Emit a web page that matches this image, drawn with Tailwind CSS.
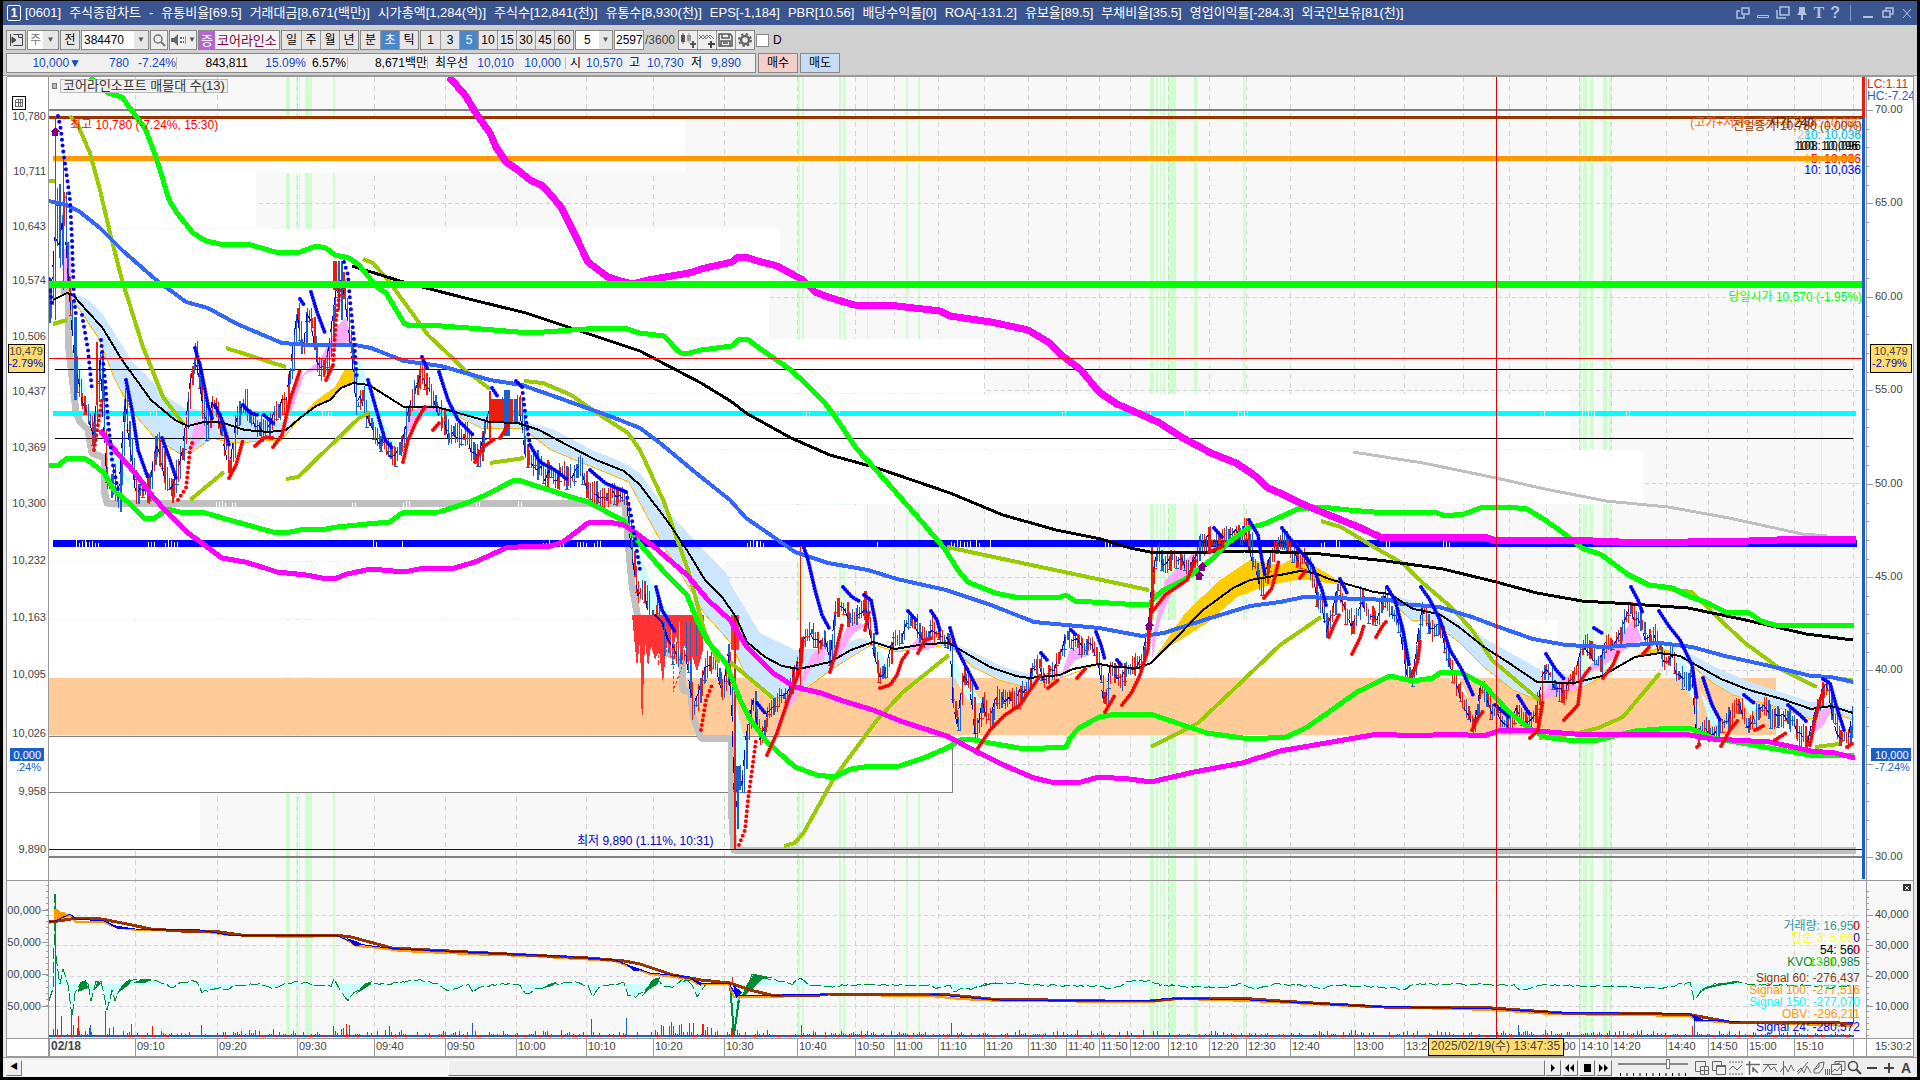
<!DOCTYPE html>
<html lang="ko">

<head>
  <meta charset="UTF-8">
  <meta name="viewport" content="width=device-width, initial-scale=1.0">
  <title>[0601] 주식종합차트</title>
  <script src="https://cdn.jsdelivr.net/npm/@tailwindcss/browser@4"></script>
</head>

<body class="h-screen overflow-hidden bg-black pt-px pb-[3px] px-[3px] font-['Liberation_Sans','Noto_Sans_CJK_KR',sans-serif] text-xs text-black">
  <div class="flex h-full flex-col bg-[#e8e8e8]">

    <!-- Title bar -->
    <header class="flex h-6 shrink-0 items-center bg-[#3a5590] px-1 text-white">
      <span class="mr-1 flex h-4 w-3.5 items-center justify-center rounded-xs border border-white font-bold">1</span>
      <h1 class="flex gap-2 whitespace-nowrap text-[13px]">
        <span>[0601]</span><span>주식종합차트</span><span>-</span><span>유통비율[69.5]</span>
        <span>거래대금[8,671(백만)]</span><span>시가총액[1,284(억)]</span><span>주식수[12,841(천)]</span>
        <span>유통수[8,930(천)]</span><span>EPS[-1,184]</span><span>PBR[10.56]</span><span>배당수익률[0]</span>
        <span>ROA[-131.2]</span><span>유보율[89.5]</span><span>부채비율[35.5]</span><span>영업이익률[-284.3]</span>
        <span>외국인보유[81(천)]</span>
      </h1>
      <div class="ml-auto flex items-center gap-1.5 text-[#b4c1de]">
        <button aria-label="분리"><svg width="14" height="14" fill="none" stroke="currentColor" stroke-width="1.5"><path d="M4 5H1v7h7V9M6 2h7v6H6z" /></svg></button>
        <button aria-label="접기"><svg width="14" height="14" fill="none" stroke="currentColor"><path d="M1.500 9.500h11v2h-11z" /></svg></button>
        <button aria-label="복사"><svg width="14" height="14" fill="none" stroke="currentColor" stroke-width="1.500"><path d="M4 1h9v8H4zM1 4v8h9" /></svg></button>
        <button aria-label="고정"><svg width="12" height="14" fill="currentColor"><path d="M3 1h6v5l2 3H7v5H5V9H1l2-3z" /></svg></button>
        <button class="font-['Liberation_Serif',serif] text-base leading-4 font-bold">T</button>
        <button class="text-base leading-4 font-bold">?</button>
        <span class="mx-1 h-4 w-px bg-[#8a9bc4]"></span>
        <button aria-label="최소화"><svg width="14" height="14" fill="currentColor"><path d="M2 10h10v2H2z" /></svg></button>
        <button aria-label="이전 크기"><svg width="14" height="14" fill="none" stroke="currentColor" stroke-width="1.500"><path d="M5 5V2h7v6H9M2 5h7v6H2z" /></svg></button>
        <button aria-label="닫기"><svg width="12" height="14" fill="none" stroke="currentColor"><path d="M2 3l8 9M10 3l-8 9" /></svg></button>
      </div>
    </header>

    <!-- Toolbars -->
    <section class="flex h-[51px] shrink-0 flex-col gap-[3px] border-b border-[#999] bg-[#d0d0d0] pt-[5px] pl-[3px]">
      <div class="flex h-5 items-stretch gap-px leading-none">
        <button aria-label="메뉴" class="w-5 border border-[#888] bg-[#e6e6e6] px-0.5"><svg width="14" height="14" fill="none" stroke="#444"><path d="M4.500 1.500h9v11h-9M9.500 1.500v3h4M1.500 1v12" /><path d="M3 4l4 3-4 3z" fill="#444" /></svg></button>
        <div class="flex w-8 border border-[#888] bg-white">
          <select aria-label="구분" class="w-4 appearance-none pl-0.5 text-[#777]"><option>주</option></select>
          <span class="flex w-4 items-center justify-center bg-[#e6e6e6] text-[8px] text-[#555]">▼</span>
        </div>
        <button class="w-5 border border-[#888] bg-[#e6e6e6]">전</button>
        <div class="flex w-[68px] border border-[#888] bg-white">
          <input aria-label="종목코드" value="384470" class="w-13 pl-0.5">
          <span class="flex w-4 items-center justify-center bg-[#e6e6e6] text-[8px] text-[#555]">▼</span>
        </div>
        <button aria-label="검색" class="w-[18px] border border-[#888] bg-[#eee] pl-px"><svg width="14" height="14" fill="none" stroke="#777" stroke-width="1.500"><circle cx="6" cy="6" r="4" /><path d="M9 9l4 4" stroke-width="2" /></svg></button>
        <button aria-label="소리" class="flex w-7 items-center border border-[#888] bg-[#eee] text-[8px] text-[#555]"><svg width="15" height="14" fill="#666"><path d="M1 5h3l4-4v12L4 9H1z" /><path d="M10 4h2v2h-2zM10 8h2v2h-2zM13 4h1v2h-1zM13 8h1v2h-1z" /></svg><span class="border-l border-[#999] pl-0.5">▼</span></button>
        <div class="flex w-[82px] items-center overflow-hidden border border-[#888] bg-[#f4f4f4] text-[13px] whitespace-nowrap text-[#800040]">
          <span class="mr-0.5 bg-[#b565cf] px-0.5 py-[3px] text-white">증</span>코어라인소
        </div>
        <div id="period" class="flex border border-[#888] bg-[#e6e6e6]"></div>
        <div id="unit" class="flex border border-[#888] bg-[#e6e6e6]"></div>
        <div id="minutes" class="flex border border-[#888] bg-[#e6e6e6]"></div>
        <div class="flex w-[38px] border border-[#888] bg-white">
          <select aria-label="간격" class="w-6 appearance-none pl-2"><option>5</option></select>
          <span class="flex w-3.5 items-center justify-center bg-[#e6e6e6] text-[8px] text-[#555]">▼</span>
        </div>
        <input aria-label="봉 개수" value="2597" class="w-[30px] border border-[#888] bg-white pl-px">
        <span class="flex w-8 items-center text-[#444]">/3600</span>
        <div class="flex border border-[#888] bg-[#eee]">
          <button aria-label="지표 추가" class="w-[19px] border-r border-[#999]"><svg width="18" height="18" fill="#555"><path d="M2 4h4v7H2zM3.500 2h1v11h-1z" /><path fill="#999" d="M8 4h4v6H8zM9.500 2h1v10h-1z" /><path d="M11 12h2v-2h2v2h2v2h-2v3h-2v-3h-2z" /></svg></button>
          <button aria-label="선 추가" class="w-[19px] border-r border-[#999]"><svg width="18" height="18" fill="none" stroke="#777"><path d="M1 8l4-4 3 4 4-4 4 4M1 4l4 4 4-4 4 4" /><path d="M13 10v7M10 13h7" stroke="#444" stroke-width="2" /></svg></button>
          <button aria-label="저장" class="w-[19px] border-r border-[#999]"><svg width="18" height="18" fill="none" stroke="#555" stroke-width="1.500"><path d="M2 3h11l2 2v10H2zM5 3v4h7V3M4 15v-5h9v5M6 12h5" /></svg></button>
          <button aria-label="설정" class="w-[18px]"><svg width="18" height="18" fill="none" stroke="#666"><circle cx="9" cy="9" r="4" stroke-width="2.500" /><circle cx="9" cy="9" r="6" stroke-width="2" stroke-dasharray="2.400 2.312" /></svg></button>
        </div>
        <label class="flex items-center gap-1"><input type="checkbox" class="h-[13px] w-[13px] appearance-none border border-[#888] bg-white">D</label>
      </div>

      <div class="flex h-5 items-stretch gap-0.5 leading-none">
        <div class="flex w-[750px] items-center border border-[#888] bg-[#f0f0f0] whitespace-nowrap text-[#1448c0]">
          <span class="w-[74px] text-right">10,000▼</span>
          <span class="w-12 text-right">780</span>
          <span class="mr-px w-12 border-r border-[#bbb] text-right">-7.24%</span>
          <span class="w-[70px] text-right text-black">843,811</span>
          <span class="w-[58px] text-right">15.09%</span>
          <span class="w-[42px] border-r border-[#bbb] pr-px text-right text-black">6.57%</span>
          <span class="w-[80px] border-r border-[#bbb] text-right text-black">8,671백만</span>
          <span class="w-10 text-right text-black">최우선</span>
          <span class="w-[46px] text-right">10,010</span>
          <span class="w-[52px] border-r border-[#bbb] pr-1 text-right">10,000</span>
          <span class="ml-1 w-4 text-black">시</span><span class="w-[43px]">10,570</span>
          <span class="w-[18px] text-black">고</span><span class="w-[44px]">10,730</span>
          <span class="w-5 text-black">저</span><span>9,890</span>
        </div>
        <button class="w-10 border border-[#888] bg-[#f5cfc9]">매수</button>
        <button class="w-10 border border-[#888] bg-[#c6dcf2]">매도</button>
      </div>
    </section>

    <!-- Chart -->
    <main class="min-h-0 flex-1 px-[3px]">
      <svg id="chart" viewBox="6 76 1908 981" class="block h-full w-full bg-white text-[11px]" shape-rendering="crispEdges" fill="none"></svg>
    </main>

    <!-- Scroll bar and chart tools -->
    <footer class="flex h-5 shrink-0 items-center border-t border-[#999] bg-[#eee] px-[3px]">
      <button aria-label="왼쪽" class="h-4 w-4 border border-white border-r-[#777] border-b-[#777] text-[8px]">◀</button>
      <div class="flex h-4 flex-1 bg-[#f7f7f7]">
        <div class="w-[28%]"></div>
        <div class="flex-1 border border-white border-r-[#777] border-b-[#777] bg-[#eee]"></div>
      </div>
      <div class="flex h-4 gap-px">
        <button aria-label="재생" class="w-4 border border-white border-r-[#777] border-b-[#777]"><svg width="14" height="14"><path d="M5 3v8l4-4z" /></svg></button>
        <button aria-label="뒤로" class="w-4 border border-white border-r-[#777] border-b-[#777]"><svg width="14" height="14"><path d="M6 3v8L2 7zM11 3v8L7 7z" /></svg></button>
        <button aria-label="정지" class="w-4 border border-white border-r-[#777] border-b-[#777]"><svg width="14" height="14"><path d="M4 3h7v8H4z" /></svg></button>
        <button aria-label="앞으로" class="w-4 border border-white border-r-[#777] border-b-[#777]"><svg width="14" height="14"><path d="M2 3v8l4-4zM7 3v8l4-4z" /></svg></button>
      </div>
      <div class="mx-1.5 flex w-[70px] flex-col gap-1">
        <input type="range" aria-label="속도" value="73" class="h-2.5 w-full appearance-none bg-[linear-gradient(#888,#888)] bg-[length:100%_2px] bg-center bg-no-repeat [&::-webkit-slider-thumb]:h-2.5 [&::-webkit-slider-thumb]:w-1 [&::-webkit-slider-thumb]:appearance-none [&::-webkit-slider-thumb]:border [&::-webkit-slider-thumb]:border-[#777] [&::-webkit-slider-thumb]:bg-white">
        <svg width="70" height="3" class="block"><path d="M2 1.500h68" stroke="#000" stroke-width="3" stroke-dasharray="1 5.500" /></svg>
      </div>
      <div class="flex items-center gap-px text-[#666]">
        <button aria-label="새 창" class="w-4"><svg width="16" height="16" fill="none" stroke="currentColor"><path d="M6 11.500H1.500v-10h10V6M6.500 6.500h8v8h-8zM10.500 6.500v8M6.500 10.500h8" /></svg></button>
        <button aria-label="겹치기" class="w-4"><svg width="16" height="16" fill="none" stroke="currentColor"><path d="M5 10.500H1.500v-9h9V5M5.500 5.500h9v9h-9z" /><path d="M5 6h10" stroke-width="2" /></svg></button>
        <button aria-label="지표" class="w-4"><svg width="16" height="16" fill="none" stroke="currentColor"><path d="M1 2h14M1 14h14" stroke-dasharray="2 1" /><path d="M1 10l4-4 4 4 5-5" /></svg></button>
        <button aria-label="십자선" class="w-4 bg-white"><svg width="16" height="16" fill="none" stroke="currentColor"><path d="M4.500 1v14M1 4.500h14M8 12V7M8 8l5 5" stroke-width="1.500" /></svg></button>
        <button aria-label="수평선" class="w-4"><svg width="16" height="16" fill="none" stroke="currentColor"><path d="M1 4.500h14M1 12l5-7 3 5 3-3 3 5" /></svg></button>
        <button aria-label="수직선" class="w-4"><svg width="16" height="16" fill="none" stroke="currentColor"><path d="M4.500 1v14M1 12l5-6 3 6 3-7 3 6" /></svg></button>
        <button aria-label="추세선" class="w-4"><svg width="16" height="16" fill="none" stroke="currentColor"><path d="M2 14L12 2M1 12l4-4 3 5 3-7 4 7" /></svg></button>
        <button aria-label="전체 삭제" class="w-4"><svg width="18" height="16" fill="none" stroke="currentColor"><path d="M1 10l5-7 5-1-1 6-4 5H1zM6 3v4l-5 3" /><path d="M12.500 9v6M14.500 9v6M16.500 9v6" /></svg></button>
        <button aria-label="차트 묶음" class="w-4"><svg width="16" height="16" fill="none" stroke="currentColor"><path d="M5 4V1.500h10v9h-3M1.500 4.500h10v10h-10zM2 12l3-3 2 2 4-5M6 4l4-1" /></svg></button>
        <button aria-label="돋보기" class="w-4"><svg width="16" height="16" fill="none" stroke="#444" stroke-width="1.500"><circle cx="6" cy="6" r="4.500" /><path d="M9 9l5 5" stroke-width="2" /></svg></button>
        <button aria-label="축소" class="w-4"><svg width="16" height="16"><path d="M3 7h10v2H3z" fill="#444" /></svg></button>
        <button aria-label="확대" class="w-4"><svg width="16" height="16"><path d="M3 7h4V3h2v4h4v2H9v4H7V9H3z" fill="#444" /></svg></button>
        <button class="w-4 text-sm leading-4 font-bold text-[#444]">A</button>
      </div>
    </footer>
  </div>

  <script>
    // Toolbar toggles
    const addToggles = (id, labels, active) => {
      document.getElementById(id).innerHTML = labels.map((label, i) =>
        `<button class="w-[19px] ${i ? 'border-l border-[#999]' : ''} ${label === active ? 'bg-[#4a86c8] text-white' : ''}">${label}</button>`
      ).join('');
    };
    addToggles('period', ['일', '주', '월', '년']);
    addToggles('unit', ['분', '초', '틱'], '초');
    addToggles('minutes', ['1', '3', '5', '10', '15', '30', '45', '60'], '5');

    const out = [];
    const add = (s) => out.push(s);
    const rect = (x, y, x2, y2, color, extra = '') => add(`<rect x="${x}" y="${y}" width="${x2 - x}" height="${y2 - y}" fill="${color}" ${extra}/>`);
    const line = (points, color, width = 1, extra = '') => add(`<polyline points="${points}" stroke="${color}" stroke-width="${width}" stroke-linejoin="round" ${extra}/>`);
    const area = (points, color) => add(`<polygon points="${points}" fill="${color}"/>`);
    const text = (x, y, value, color = '#444', anchor = 'start', extra = '') => add(`<text x="${x}" y="${y}" fill="${color}" text-anchor="${anchor}" ${extra}>${value}</text>`);
    // Labels drawn over the plot are one size larger than the axis
    const note = (x, y, value, color, anchor = 'end') => text(x, y, value, color, anchor, 'class="text-xs"');

    // Fixed seed keeps the bars the same on each load
    let seed = 7;
    const random = () => (seed = (seed * 16807) % 2147483647) / 2147483647;

    const times = [['02/18', 49], ['09:10', 135], ['09:20', 217], ['09:30', 297], ['09:40', 374], ['09:50', 445], ['10:00', 516], ['10:10', 586], ['10:20', 653], ['10:30', 724], ['10:40', 797], ['10:50', 855], ['11:00', 894], ['11:10', 938], ['11:20', 984], ['11:30', 1028], ['11:40', 1066], ['11:50', 1099], ['12:00', 1130], ['12:10', 1168], ['12:20', 1209], ['12:30', 1246], ['12:40', 1290], ['13:00', 1354], ['13:20', 1404], ['', 1463], ['', 1509], ['14:00', 1546], ['14:10', 1579], ['14:20', 1611], ['14:40', 1666], ['14:50', 1708], ['15:00', 1747], ['15:10', 1794], ['', 1853]];

    // Pane background, signal stripes, grid
    rect(49, 77, 1866, 1038, '#f8f8f8');
    const stripes = [[286, 4], [296, 1], [299, 1], [305, 4], [310, 2], [333, 2], [798, 2], [802, 2], [839, 2], [843, 2], [867, 1], [906, 2], [918, 2], [1150, 4], [1156, 2], [1160, 1], [1163, 2], [1168, 8], [1194, 3], [1243, 2], [1579, 3], [1583, 2], [1586, 1], [1590, 1], [1592, 1], [1603, 4], [1609, 2], [1821, 1]];
    stripes.forEach(([x, w]) => rect(x, 77, x + w, 1038, '#ccffcc'));
    times.slice(1).forEach(([, x]) => line(`${x + .5},77 ${x + .5},1038`, '#d4d4d4', 1, 'stroke-dasharray="5 4"'));
    [203, 297, 390, 483, 577, 670, 764, 915, 945, 976, 1006].forEach((y) => line(`49,${y + .5} 1862,${y + .5}`, '#d4d4d4', 1, 'stroke-dasharray="4 3"'));

    // Volume by price
    [[119, 173, 685], [173, 228, 256], [229, 283, 780], [284, 338, 769], [339, 393, 984], [394, 449, 1571], [450, 504, 1643], [505, 561, 864], [562, 619, 725], [620, 677, 1557], [737, 792, 953], [793, 849, 200]].forEach(([y, y2, x]) => rect(49, y, x, y2, '#fff'));
    rect(49, 678, 1776, 735, '#ffcc99');
    line('49,736.5 952.500,736.500 952.500,792.500 49,792.500', '#808080');

    // Clouds round the moving averages
    area('67,290 88,300 102,313 131,360 167,397 184,408 220,412 286,423 300,418 298,420 282,440 233,443 212,438 192,452 180,454 155,438 131,410 114,377 98,337 78,307', '#cce6ff');
    area('437,405 518,420 555,430 592,450 624,463 640,473 664,507 697,543 726,573 734,590 760,633 795,650 830,648 860,638 873,642 873,644 843,662 817,680 795,697 773,698 747,677 730,642 704,613 689,587 660,540 640,503 629,482 551,450 522,428 481,428', '#cce6ff');
    area('873,640 895,647 949,641 969,650 1003,667 1034,675 1073,669 1055,680 1025,687 999,680 973,667 949,645 895,652', '#cce6ff');
    area('1390,594 1413,601 1443,612 1484,638 1509,652 1545,672 1578,676 1602,676 1574,692 1537,700 1513,690 1484,667 1460,643 1431,621 1411,620 1390,600', '#cce6ff');
    area('1680,656 1692,655 1721,670 1753,683 1811,702 1827,702 1853,710 1853,720 1831,712 1811,719 1770,705 1733,695 1713,683', '#cce6ff');
    area('300,418 314,402 335,387 345,369 357,371 375,387 404,407 388,397 369,385 353,383 341,388 330,400 316,406', '#ffcc00');
    area('1151,663 1185,613 1220,580 1250,560 1280,565 1292,559 1313,565 1341,582 1341,585 1300,579 1280,583 1263,587 1237,597 1207,623 1172,645', '#ffcc00');
    area('1602,676 1640,653 1660,647 1680,655 1660,653 1635,657', '#ffcc00');
    line('67,297 78,307 98,337 114,377 131,410 155,438 180,454 192,452 212,438 233,443 282,440 298,420', '#ffbb00');
    line('441,408 481,428 522,428 551,450 629,482 640,503 660,540 689,587 704,613 730,642 747,677 773,698 795,697 817,680 843,662 873,644 895,652 949,645 973,667 999,680 1025,687 1055,680 1099,664', '#ffbb00');
    line('1390,600 1411,620 1431,621 1460,643 1484,667 1513,690 1537,700 1574,692 1602,677', '#ffbb00');
    line('1680,656 1713,683 1733,695 1770,705 1811,719 1831,712 1853,720', '#ffbb00');
    ['357,350 370,390 385,425 400,448 402,455 390,450 372,425 358,400', '76,340 88,400 92,420 86,420 78,380', '100,400 112,440 124,470 136,490 125,480 108,460', '524,430 545,462 570,475 550,478 530,455', '590,480 624,492 590,492', '634,540 655,590 690,650 676,640 655,620 640,590', '733,690 744,740 748,760 738,765', '873,640 882,672 890,670 880,650', '950,650 965,680 985,705 968,700 956,680', '1313,570 1330,600 1324,612', '1395,605 1412,650 1410,668 1400,640', '1435,615 1460,680 1470,700 1450,680', '1665,635 1690,670 1700,715 1688,690', '1700,690 1722,725 1710,725', '1740,695 1760,705 1750,715', '1790,715 1808,740 1798,730']
      .forEach((points) => area(points, '#ccffff'));
    ['288,420 296,380 320,360 338,325 346,318 352,340 338,345 325,366 304,375 292,410', '64,250 70,240 72,300 62,290', '188,450 196,420 215,425 205,435 192,450', '403,440 412,410 430,405 445,410 425,415 410,430', '770,735 795,690 812,655 826,640 824,660 810,670 795,700', '832,660 850,620 866,625 852,635 838,660', '908,650 920,635 940,645 925,650', '1060,680 1070,650 1085,645 1090,655 1075,660', '1152,640 1165,580 1186,560 1200,545 1194,570 1175,585 1160,620 1152,660', '1210,550 1246,532 1240,545', '1540,700 1548,685 1572,675 1578,690 1560,695', '1580,675 1600,655 1625,630 1634,618 1642,640 1625,650 1600,668', '1812,735 1822,710 1834,705 1824,725']
      .forEach((points) => area(points, '#ffaaff'));

    // Lowest price trail
    line('61,290 68,292 69,350 73,385 76,412 80,422 88,430 92,453 104,458 104,490 107,503 625,503 628,540 632,585 640,630 665,652 682,660 683,690 691,692 693,717 701,738 731,739 731,803 734,850 1856,850', '#c0c0c0', 7);

    // Horizontal levels
    line('49,110 1862,110', '#808080', 2);
    line('49,117.500 1862,117.500', '#993300', 3);
    line('53,158.500 1856,158.500', '#ff9900', 5);
    line('53,413.500 1856,413.500', '#00ffff', 5);
    line('53,543.500 1857,543.500', '#0000ff', 7);
    // Short breaks where hidden bars cross the levels
    [[76, 4], [86, 3], [95, 2], [148, 3], [165, 5], [373, 2], [402, 1], [543, 3], [560, 2], [577, 4], [594, 3], [747, 4], [757, 3], [877, 1], [951, 4], [964, 3], [976, 2], [990, 1], [1105, 3], [1321, 2], [1336, 2], [1386, 2], [1443, 3]].forEach(([x, count]) => {
      for (let k = 0; k < count; k++) rect(x + k * 3, 540 + Math.floor(random() * 4), x + k * 3 + 1, 547, '#fff');
    });
    [[150, 3], [322, 4], [803, 3], [836, 2], [1062, 2], [1150, 1], [1184, 2], [1238, 4], [1541, 2], [1582, 5], [1626, 2]].forEach(([x, count]) => {
      for (let k = 0; k < count; k++) rect(x + k * 3, 411 + Math.floor(random() * 2), x + k * 3 + 1, 416, '#fff');
    });
    [[216, 4], [232, 2], [352, 2], [403, 3], [476, 2], [518, 2]].forEach(([x, count]) => {
      for (let k = 0; k < count; k++) rect(x + k * 3, 501 + Math.floor(random() * 3), x + k * 3 + 1, 507, '#fff');
    });
    line('55,369.500 1853,369.500', '#000');
    line('55,438.500 1853,438.500', '#000');
    line('49,849.500 1863,849.500', '#0000c0');
    line('49,857 1863,857', '#808080', 2);

    // Candles follow these closing points
    const closes = [49, 310, 53, 270, 57, 200, 60, 260, 64, 190, 67, 280, 70, 300, 75, 370, 82, 400, 88, 420, 93, 440, 97, 390, 100, 360, 104, 440, 107, 485, 113, 480, 118, 495, 122, 440, 125, 400, 130, 450, 136, 492, 143, 488, 150, 488, 155, 440, 160, 450, 165, 480, 172, 487, 178, 470, 184, 440, 190, 380, 195, 355, 200, 390, 206, 430, 214, 400, 222, 430, 229, 466, 237, 420, 245, 405, 255, 430, 270, 425, 280, 405, 286, 400, 292, 360, 297, 315, 302, 350, 307, 315, 312, 330, 317, 365, 325, 365, 331, 330, 335, 290, 341, 280, 345, 300, 352, 355, 356, 400, 362, 395, 369, 425, 380, 440, 388, 450, 395, 455, 402, 440, 408, 410, 415, 390, 420, 370, 427, 385, 435, 410, 442, 420, 449, 435, 465, 435, 473, 450, 478, 455, 485, 430, 490, 410, 500, 407, 515, 405, 520, 405, 525, 450, 535, 465, 545, 475, 560, 475, 570, 480, 580, 470, 588, 490, 600, 495, 622, 495, 627, 510, 632, 560, 638, 600, 645, 590, 650, 625, 657, 610, 662, 640, 670, 650, 680, 655, 688, 660, 692, 710, 698, 690, 705, 665, 715, 660, 722, 690, 728, 660, 732, 720, 735, 825, 738, 770, 742, 780, 747, 730, 753, 700, 760, 740, 767, 715, 775, 700, 790, 690, 797, 660, 803, 640, 809, 635, 818, 645, 825, 640, 830, 665, 835, 610, 841, 603, 850, 620, 857, 610, 864, 605, 871, 635, 878, 675, 885, 670, 893, 640, 902, 635, 908, 615, 915, 625, 922, 640, 930, 625, 938, 635, 945, 645, 950, 640, 953, 710, 958, 725, 962, 680, 970, 685, 975, 735, 982, 700, 990, 720, 997, 700, 1010, 700, 1020, 695, 1028, 680, 1037, 662, 1044, 678, 1052, 672, 1058, 660, 1065, 636, 1075, 640, 1082, 650, 1090, 640, 1097, 660, 1104, 700, 1110, 670, 1120, 680, 1128, 670, 1135, 665, 1143, 650, 1149, 620, 1152, 580, 1157, 555, 1163, 570, 1170, 560, 1180, 558, 1186, 570, 1193, 560, 1200, 542, 1210, 537, 1220, 542, 1230, 530, 1238, 537, 1246, 530, 1253, 560, 1261, 585, 1270, 560, 1280, 542, 1288, 547, 1296, 560, 1304, 560, 1312, 580, 1322, 610, 1326, 630, 1333, 610, 1338, 590, 1345, 615, 1352, 625, 1360, 600, 1368, 620, 1375, 620, 1383, 598, 1392, 610, 1400, 630, 1405, 670, 1412, 675, 1418, 640, 1422, 603, 1430, 630, 1440, 630, 1450, 670, 1460, 700, 1468, 710, 1473, 725, 1480, 690, 1488, 708, 1496, 715, 1510, 722, 1517, 712, 1525, 723, 1533, 715, 1540, 700, 1542, 670, 1550, 680, 1557, 690, 1562, 695, 1570, 680, 1578, 670, 1583, 640, 1590, 652, 1600, 666, 1606, 640, 1618, 640, 1624, 620, 1630, 608, 1636, 620, 1645, 635, 1655, 635, 1662, 660, 1670, 655, 1680, 680, 1692, 680, 1696, 735, 1704, 720, 1710, 735, 1720, 725, 1730, 715, 1738, 705, 1748, 725, 1760, 710, 1768, 712, 1775, 720, 1790, 718, 1797, 733, 1808, 742, 1813, 715, 1820, 698, 1827, 688, 1833, 720, 1840, 735, 1848, 738, 1853, 710];
    const candles = [];
    for (let i = 0; i < closes.length - 2; i += 2) {
      const [x, y, x2, y2] = closes.slice(i, i + 4);
      for (let px = x; px < x2; px += 2) {
        candles.push([px, y + (y2 - y) * (px - x) / (x2 - x) + (random() - .5) * 12]);
      }
    }
    let trend = '';
    candles.forEach(([x, y], i) => {
      const previous = i ? candles[i - 1][1] : y;
      const size = 4 + random() * (x < 210 ? 24 : x < 760 ? 18 : 14);
      const color = random() > .5 ? '#e81d0c' : '#1a5fcc';
      line(`${x + .5},${Math.round(Math.min(y, previous) - size / 2)} ${x + .5},${Math.round(Math.max(y, previous) + size / 2)}`, color, i % 5 ? 1 : 2);
      if (i % 4 === 0) line(`${x - 1},${Math.round(y + size / 2) + .5} ${x + 3},${Math.round(y + size / 2) + .5}`, color);
      if (i % 2) trend += `${x},${y.toFixed(1)} `;
    });
    line(trend, '#0000cc', 1, 'stroke-dasharray="16 10"');
    rect(49, 280, 51, 323, '#1a5fcc');
    rect(55, 117, 56, 320, '#e81d0c');
    rect(63, 158, 64, 290, '#e81d0c');
    rect(74, 317, 77, 400, '#1a5fcc');
    rect(96, 342, 98, 405, '#e81d0c');
    rect(333, 261, 337, 290, '#e81d0c');
    rect(338, 261, 340, 310, '#1a5fcc');
    rect(341, 261, 343, 320, '#1a5fcc');
    rect(489, 391, 491, 440, '#e81d0c');
    rect(491, 399, 504, 423, '#e81d0c');
    rect(504, 390, 510, 436, '#1a5fcc');
    rect(510, 399, 513, 423, '#e81d0c');
    rect(514, 399, 518, 423, '#1a5fcc');
    rect(800, 546, 801, 690, '#e81d0c');
    rect(1151, 547, 1153, 612, '#e81d0c');
    rect(731, 615, 739, 650, '#ff3333');
    rect(734, 615, 736, 849, '#e81d0c');
    rect(736, 766, 741, 790, '#1a5fcc');

    // Selling volume block
    area('632,615 704,615 703,650 697,672 692,655 688,665 685,645 680,655 676,635 671,660 667,640 663,684 659,650 655,660 651,645 648,668 645,640 642,731 640,640 637,668', '#ff3333');
    line('658,640 658,665 673,640 673,692 691,640 691,670', '#ff3333', 1, 'stroke-dasharray="3 2"');
    line('655,615 662,622 668,640 674,648', '#0000ff', 2);
    [664, 671, 679, 686, 690, 696].forEach((x) => rect(x, 622, x + 1, 656, x % 2 ? '#fff' : '#1a5fcc'));

    // Moving averages
    ['49,181 55,181', '70,116 77,123 90,153 100,190 110,233 122,280 143,347 163,397 184,425', '53,324 67,320', '226,348 286,367', '190,500 224,472', '286,479 298,477 326,450 359,418 369,413', '363,259 373,263 388,280 428,335 465,370 490,389', '524,381 543,383 571,395 600,415 628,433 640,450 664,502 689,573 704,630 719,663', '730,662 773,698', '784,846 795,843 804,832 834,778 877,720 903,692 949,655', '947,547 1003,559 1149,590', '1151,747 1198,723 1233,690 1280,645 1321,617', '1321,521 1341,527 1374,547 1402,563 1423,583 1451,607 1472,630 1492,660 1525,688 1539,700', '1539,738 1578,733 1598,728 1623,717 1660,673', '1668,589 1692,592 1717,617 1745,643 1782,670 1817,687', '1815,747 1839,744', '1839,679 1853,680', '490,463 524,458']
      .forEach((points) => line(points, '#99cc00', 4));
    line('1353,452 1423,463 1496,478 1545,489 1606,501 1668,507 1729,518 1802,534 1827,536', '#c0c0c0', 3);
    line('49,201 67,205 80,212 100,228 122,250 155,279 186,302 208,308 237,324 282,343 310,345 355,345 371,348 404,361 441,366 490,380 522,385 559,398 612,417 640,428 660,443 701,477 730,500 746,518 775,538 795,552 828,563 868,570 897,579 946,590 991,605 1034,622 1099,628 1142,636 1164,633 1207,619 1250,606 1280,602 1304,597 1390,600 1402,604 1439,607 1472,617 1496,626 1533,639 1566,645 1606,647 1660,643 1692,647 1725,656 1770,666 1811,676 1831,677 1853,682', '#3366ff', 4);
    line('352,266 400,281 422,287 473,300 526,313 571,328 628,347 640,351 701,383 732,402 746,413 791,438 830,455 877,468 950,493 1003,515 1056,530 1101,539 1130,548 1150,552 1211,552 1244,551 1280,552 1321,554 1386,561 1443,569 1496,582 1537,593 1582,601 1631,604 1688,608 1741,619 1806,634 1853,640', '#000', 3);
    line('53,300 67,293 73,295 88,312 102,327 122,360 151,400 175,420 188,426 204,422 220,422 245,430 269,432 286,430 300,418 316,406 330,400 341,388 353,383 369,385 388,397 404,407 437,407 469,416 490,422 518,423 539,430 567,445 596,460 624,471 640,485 668,522 685,547 705,580 722,597 736,617 747,642 765,657 782,666 799,669 830,662 851,650 873,642 895,649 925,644 949,643 969,655 990,667 1016,676 1029,678 1060,675 1073,669 1099,664 1116,667 1138,668 1151,663 1172,642 1203,610 1233,588 1250,580 1280,575 1300,571 1315,573 1329,579 1357,587 1374,592 1390,594 1413,609 1439,614 1459,627 1484,647 1509,663 1537,682 1574,683 1602,676 1635,657 1660,653 1680,656 1721,679 1749,690 1782,699 1811,709 1831,706 1853,713', '#000', 2);
    line('90,77 108,93 122,97 135,115 145,128 157,160 163,180 169,200 177,213 193,233 206,241 220,244 251,245 279,253 300,252 316,246 326,248 335,255 349,258 359,265 377,287 386,293 398,313 404,323 410,326 428,325 469,328 530,333 600,328 624,328 640,333 664,336 679,352 685,354 701,350 732,346 738,340 747,339 762,350 791,370 807,385 824,402 836,418 856,448 885,480 922,522 944,548 958,570 968,582 995,593 1015,597 1060,597 1066,595 1075,601 1142,605 1150,604 1154,598 1162,591 1187,578 1211,560 1228,543 1248,528 1264,524 1280,517 1298,509 1321,507 1349,510 1386,513 1435,512 1445,516 1464,514 1480,508 1508,507 1527,509 1545,520 1562,532 1582,548 1602,555 1627,574 1649,585 1672,588 1688,596 1708,603 1725,612 1749,613 1761,621 1778,626 1806,625 1854,625', '#00ff00', 5);
    line('49,466 59,465 67,458 84,458 92,463 104,473 114,490 131,505 145,519 155,518 167,509 184,513 202,512 233,521 273,532 290,532 300,530 326,529 337,527 367,524 390,522 402,513 439,512 467,503 490,493 512,481 518,480 543,488 571,497 588,502 624,521 639,543 665,573 687,595 697,620 708,642 726,663 739,697 749,718 767,742 795,767 817,775 834,777 851,769 871,766 899,766 921,759 947,748 960,740 969,739 990,743 1025,749 1066,747 1070,738 1079,728 1099,717 1116,714 1151,714 1177,723 1207,733 1250,739 1286,737 1306,728 1333,709 1357,692 1390,676 1413,681 1433,678 1441,672 1462,673 1484,685 1509,712 1529,728 1545,737 1574,741 1598,740 1635,731 1672,728 1692,729 1713,738 1770,748 1810,755 1854,755', '#00ff00', 5);
    line('449,77 465,95 477,115 490,133 496,147 506,162 518,170 530,180 543,186 561,207 575,235 588,262 608,277 620,281 633,284 648,280 689,273 705,268 732,262 738,257 746,257 754,260 777,266 803,280 815,292 828,297 854,305 897,306 940,311 950,316 991,322 1028,330 1048,342 1064,357 1081,370 1099,392 1117,404 1158,422 1183,438 1211,453 1236,463 1254,475 1268,488 1280,493 1300,503 1329,515 1361,528 1380,537 1402,538 1443,537 1484,537 1496,541 1566,540 1619,542 1688,542 1749,541 1806,539 1856,539', '#ff00ff', 7);
    line('100,430 112,447 135,473 153,497 167,512 188,533 202,543 222,558 245,562 265,568 277,572 306,575 322,578 337,578 347,574 371,569 404,572 424,568 451,569 475,562 506,548 530,546 547,547 563,542 588,523 608,522 624,525 632,530 652,545 687,575 708,600 730,620 747,647 773,673 795,687 821,693 843,701 873,710 903,722 947,736 977,752 1008,767 1034,778 1051,782 1081,782 1099,777 1129,779 1151,782 1168,778 1194,772 1242,763 1280,751 1378,734 1415,736 1451,734 1484,736 1498,731 1525,730 1574,734 1627,735 1684,734 1713,739 1770,742 1811,751 1835,753 1855,758', '#ff00ff', 5);

    // Parabolic stops
    const dots = (points, color, gap) => line(points, color, 4, `stroke-linecap="round" shape-rendering="auto" stroke-dasharray="0 ${gap}"`);
    ['58,116 61,130 63,150 66,170 68,185 70,200 72,240 74,300 76,315', '49,279 52,305', '82,315 88,350 92,390', '101,340 105,380 108,420 112,460 118,490', '344,262 348,275 350,300 354,340 357,380', '522,387 526,420 530,445', '626,492 632,520 640,570'].forEach((points) => dots(points, '#0000ff', 6));
    ['126,380 132,410 138,450 148,478', '162,438 170,460 176,478', '195,348 200,365 208,405 212,418', '215,405 222,420 229,445', '243,405 250,413 258,415', '264,415 273,423', '300,299 304,305', '311,292 317,312 325,333', '368,380 375,405 385,440 393,449', '422,357 428,370', '439,372 448,400 458,420 473,435', '492,388 498,397', '516,381 522,387', '530,445 540,462 555,470 568,480', '590,470 605,483 626,492', '656,587 662,610 675,632', '757,703 765,713', '803,545 808,560 815,590 822,615 829,628', '843,587 852,597 861,602', '864,595 871,600 875,620 877,635', '908,611 916,620', '931,611 937,620 940,631', '950,628 955,645 965,665 978,690', '1041,653 1047,660', '1071,630 1077,636', '1096,632 1101,645 1105,660', '1117,660 1122,666', '1214,528 1222,537', '1249,520 1258,535 1262,560 1265,575', '1282,528 1295,545 1312,565 1322,590 1326,605', '1340,579 1348,595', '1387,587 1395,600 1403,630 1409,665', '1421,587 1430,600 1440,620 1450,650 1462,670 1473,695', '1495,705 1510,718', '1518,696 1530,715', '1546,654 1556,670 1565,680', '1594,628 1602,633', '1631,587 1638,600 1643,614', '1659,611 1668,625 1680,640 1692,665 1697,700', '1703,678 1712,705 1721,722', '1744,695 1755,704', '1788,705 1800,715 1808,723', '1823,679 1830,683 1836,705 1844,730'].forEach((points) => dots(points, '#0000ff', 3));
    ['94,450 98,425 102,400', '178,500 186,488 190,450 193,440', '333,365 336,320 340,290', '701,730 706,700 712,685', '739,845 745,830 748,800 752,770 756,740'].forEach((points) => dots(points, '#ff0000', 5));
    ['229,478 236,465 243,440', '255,446 265,437 273,438', '273,447 282,435 290,400', '290,400 300,370', '326,380 333,365', '403,462 408,440 417,420 426,405', '433,430 440,422', '475,462 483,447 496,438', '500,438 508,425', '767,755 777,733 788,700 800,670 803,640', '830,672 835,655 842,625', '865,630 869,612', '880,688 890,685 897,675 902,660 908,652', '918,653 925,640 932,638', '978,748 990,730 1005,715 1020,705 1030,690 1040,676', '1048,688 1058,680', '1077,678 1086,668', '1105,712 1115,695', '1122,705 1132,692 1140,675 1148,650 1153,590', '1152,612 1165,595 1187,580 1196,560', '1209,552 1225,545', '1264,598 1272,588 1279,560', '1300,578 1306,570', '1329,637 1334,625 1339,615', '1352,654 1360,638 1364,625', '1376,637 1383,625 1388,620', '1412,676 1418,660 1420,640', '1472,730 1478,718 1484,710', '1530,738 1538,730 1543,700', '1564,720 1578,705 1581,680 1590,668', '1603,678 1613,665 1619,650', '1643,654 1650,646', '1697,747 1701,743', '1721,746 1730,730 1738,720', '1755,730 1765,725', '1775,740 1786,733', '1810,745 1815,720 1820,700 1824,690', '1847,747 1853,743'].forEach((points) => dots(points, '#ff0000', 3));

    // Buy arrows, opening price
    [[55, 127], [1149, 621], [1199, 571], [1202, 562]].forEach(([x, y]) => area(`${x},${y} ${x + 5},${y + 5} ${x + 3},${y + 5} ${x + 3},${y + 9} ${x - 3},${y + 9} ${x - 3},${y + 5} ${x - 5},${y + 5}`, '#800080'));
    line('49,284.500 1862,284.500', '#00ff00', 7);

    // Lower pane: volume
    const spikes = { 61: 20, 71: 18, 78: 20, 90: 11, 105: 25, 131: 12, 152: 10, 201: 11, 273: 7, 346: 12, 389: 10, 472: 13, 626: 18, 591: 17, 671: 14, 689: 13, 693: 13, 702: 12, 732: 59, 801: 11, 951: 13, 1518: 11, 1692: 10, 1694: 20 };
    for (let x = 49; x < 1854; x++) {
      const busy = (x < 120 || (x > 330 && x < 355) || (x > 620 && x < 740)) ? 7 : 3;
      const height = spikes[x] || (x % 2 ? 1 + Math.pow(random(), 4) * busy * 1.6 : 1);
      rect(x, 1036 - height, x + 1, 1037, random() > .35 ? '#e81d0c' : '#1a5fcc');
    }
    line('49,1036.500 1853,1036.500', '#1a5fcc', 1, 'stroke-dasharray="7 5"');

    // Volume oscillator
    const kvo = [49, 1000, 53, 990, 54, 945, 55, 894, 56, 956, 60, 985, 63, 970, 68, 985, 72, 1018, 75, 992, 80, 985, 88, 983, 91, 1000, 96, 982, 101, 982, 104, 995, 107, 1010, 112, 990, 115, 1000, 118, 992, 125, 984, 131, 980, 150, 980, 160, 982, 173, 988, 180, 982, 196, 981, 202, 992, 220, 988, 227, 990, 235, 985, 260, 984, 272, 989, 285, 983, 300, 982, 320, 986, 331, 986, 334, 978, 340, 990, 348, 1001, 355, 992, 370, 984, 390, 984, 420, 980, 440, 985, 447, 991, 469, 984, 473, 992, 480, 987, 500, 984, 520, 985, 526, 995, 535, 990, 550, 985, 575, 982, 588, 986, 593, 996, 600, 987, 624, 983, 628, 995, 636, 997, 650, 985, 657, 978, 665, 987, 672, 988, 685, 978, 692, 985, 697, 997, 705, 985, 715, 981, 729, 983, 734, 1033, 738, 1000, 745, 990, 752, 975, 760, 977, 775, 980, 792, 984, 801, 978, 810, 985, 830, 987, 850, 985, 930, 985, 936, 989, 950, 985, 953, 992, 965, 988, 974, 989, 985, 984, 1000, 983, 1060, 986, 1100, 986, 1108, 989, 1120, 986, 1130, 981, 1150, 981, 1160, 985, 1200, 987, 1220, 988, 1240, 984, 1256, 989, 1275, 984, 1313, 986, 1322, 989, 1335, 985, 1395, 988, 1404, 989, 1415, 984, 1515, 985, 1520, 991, 1540, 985, 1660, 988, 1690, 983, 1694, 1000, 1702, 990, 1715, 984, 1737, 982, 1750, 985, 1820, 986, 1825, 989, 1853, 985];
    let kvoLine = '';
    for (let i = 0; i < kvo.length - 2; i += 2) {
      for (let x = kvo[i]; x < kvo[i + 2]; x += 3) {
        kvoLine += `${x},${(kvo[i + 1] + (kvo[i + 3] - kvo[i + 1]) * (x - kvo[i]) / (kvo[i + 2] - kvo[i]) + (random() - .5) * 2).toFixed(1)} `;
      }
    }
    area(`49,985 ${kvoLine} 1853,985`, '#ccffff');
    line('49,985 1853,985', '#ccffff', 2);
    line(kvoLine, '#008a36', 1, 'stroke-dasharray="11 3"');
    ['78,992 80,982 86,980 88,988', '94,990 98,981 101,984', '117,994 123,984 130,979 130,984 122,990', '133,983 142,979 152,979 145,983', '356,994 364,984 372,981 370,985 364,989', '541,989 549,984 556,982 552,986', '642,996 652,980 660,977 658,984 650,989', '741,998 747,984 754,974 764,976 774,978 762,979 754,988', '682,982 687,977 692,980', '1699,991 1708,986 1735,981 1737,983 1718,986', '978,987 986,984 998,982 985,986'].forEach((points) => area(points, '#008a36'));
    line('55.500,894 55.500,970', '#008a36');
    line('55.500,970 55.500,1036', '#1a5fcc');
    line('730,983 734,1035 739,1000', '#008a36', 2);
    line('1853.500,985 1853.500,1024', '#008a36');

    // On balance volume and signals
    area('54,909 57,909 60,912 64,912 70,916 60,918 54,922', '#ff9900');
    const obv = '49,922 58,921 71,919 96,918 122,923 151,929 180,931 220,932 241,935 335,935 351,937 392,948 449,951 526,955 588,958 624,961 640,964 673,975 701,980 730,983 750,990 771,995 820,995 828,994 950,995 991,999 1105,1001 1150,1001 1183,998 1252,999 1280,1001 1313,1003 1382,1007 1492,1008 1562,1013 1631,1013 1692,1015 1729,1022 1827,1022 1853,1024';
    line('49,923 55,921 70,915 76,922 104,922 115,927 135,930 200,931 228,935 290,937 340,936 357,946 380,948 400,951 490,955 530,956 560,958 615,961 630,967 650,974 690,979 697,984 729,984 734,997 770,997 828,995 930,996 960,999 1000,1001 1150,1002 1180,999 1250,1001 1290,1003 1370,1007 1492,1010 1550,1014 1690,1016 1697,1021 1760,1023 1853,1026', '#ff9900', 2);
    line(obv, '#993300', 3);
    line('49,922 55,921 70,914 76,919 104,921 115,926 135,929 200,930 228,935 335,935 357,944 380,947 400,949 490,953 560,956 615,960 630,966 650,973 690,977 697,983 729,983 736,996 828,994 930,994 960,997 1000,1000 1150,1001 1168,998 1250,1000 1290,1002 1370,1006 1492,1009 1550,1012 1690,1014 1697,1020 1760,1022 1853,1024', '#0000ff', 1);
    area('105,922 118,926 132,929 118,929', '#0000ff');
    area('346,938 358,942 364,945 354,946', '#0000ff');
    area('624,963 634,967 640,971 634,971', '#0000ff');
    area('693,980 701,982 701,986', '#0000ff');
    area('733,985 742,992 736,998', '#0000ff');
    area('1694,1015 1706,1021 1694,1021', '#0000ff');

    // Crosshair
    line('49,358.500 1863,358.500', '#ff0000');
    line('1496.500,77 1496.500,1038', '#e00000');

    // Chart labels
    rect(60, 79, 227, 92, '#f0f0f0', 'stroke="#bbb"');
    text(63, 90, '코어라인소프트 매물대 수(13)', '#333', 'start', 'class="text-[13px]"');
    rect(52, 83, 56, 88, '#bbb', 'stroke="#777"');
    note(70, 129, '최고 10,780 (-7.24%, 15:30)', '#ff0000', 'start');
    note(577, 845, '최저 9,890 (1.11%, 10:31)', '#0000cc', 'start');
    note(1861, 127, '(고가+저가+시가+종가)/4: 10,036', '#ff6600');
    note(1814, 127, '시가 240', '#222');
    note(1862, 130, '전일종가 10,780 (0.00%)', '#993300');
    note(1861, 139, '280: 10,036', '#c0c0c0');
    note(1861, 139, '10: 10,036', '#00ccff');
    note(1861, 150, '108: 10,096', '#000');
    note(1858, 150, '100: 10,096', '#000');
    note(1861, 163, '15: 10,036', '#ffcc00');
    note(1861, 163, '5: 10,036', '#ff0000');
    line('1780,158.500 1856,158.500', '#ff9900', 5, 'stroke-opacity=".75"');
    note(1861, 174, '30: 10,036', '#cce6ff');
    note(1861, 174, '10: 10,036', '#0000ff');
    note(1862, 301, '당일시가 10,570 (-1.95%)', '#00ff00');
    note(1860, 930, '거래량: 16,950', '#339999');
    note(1860, 930, '0', '#ff0000');
    note(1860, 942, '단순 3: 5,660', '#ffff00');
    note(1860, 942, '0', '#0000ff');
    note(1860, 954, '54: 560', '#000');
    note(1860, 954, '0', '#ff0033');
    note(1860, 966, 'KVO: -80,985', '#008a36');
    note(1836, 966, '13: 1', '#00ff00');
    note(1860, 977, 'KVO signal: -78,687', '#ccffff');
    note(1860, 982, 'Signal 60: -276,437', '#993300');
    note(1860, 994, 'Signal 100: -277,516', '#ff9900');
    note(1860, 1006, 'Signal 150: -277,070', '#00ffff');
    note(1860, 1018, 'OBV: -296,211', '#ff9900');
    note(1860, 1031, 'Signal 24: -280,572', '#0000ff');
    line('1740,1022 1827,1022 1853,1024', '#993300', 2);

    // Left axis
    rect(6, 77, 49, 1057, '#fff');
    rect(6, 881, 48, 1038, '#f8f8f8');
    ['10,780', '10,711', '10,643', '10,574', '10,506', '10,437', '10,369', '10,300', '10,232', '10,163', '10,095', '10,026', '9,958', '9,890'].forEach((price, i) => text(46, [120, 175, 230, 284, 340, 395, 451, 507, 564, 621, 678, 737, 795, 853][i], price, '#444', 'end'));
    ['00,000', '50,000', '00,000', '50,000'].forEach((value, i) => {
      text(41, 914 + i * 32, value, '#444', 'end');
      line(`42,${910.5 + i * 32} 48,${910.5 + i * 32}`, '#999');
    });
    for (let y = 885; y < 1006; y += 6) line(`46,${y + .5} 48,${y + .5}`, '#999');
    rect(12.5, 96.500, 25.500, 109.500, '#fff', 'stroke="#000"');
    line('15.500,99.500 22.500,99.500 22.500,106.500 15.500,106.500 15.500,99.500', '#666');
    line('15,102.500 23,102.500', '#666');
    line('18.500,99 18.500,107', '#666');
    line('20.500,99 20.500,107', '#666');
    rect(8.500, 344.500, 44.500, 372.500, '#ffdc6e', 'stroke="#000"');
    text(43, 355, '10,479', '#444', 'end');
    text(43, 367, '-2.79%', '#0000cc', 'end');
    rect(10, 748, 44, 761, '#1a5fcc');
    text(41, 759, '0,000', '#fff', 'end');
    text(41, 771, '.24%', '#1a5fcc', 'end');

    // Right axis
    rect(1866, 77, 1914, 1057, '#fff');
    rect(1867, 881, 1913, 1038, '#f8f8f8');
    rect(1862, 77, 1865, 117, '#e81d0c');
    rect(1862, 117, 1865, 879, '#1a5fcc');
    note(1867, 88, 'LC:1.11', '#e81d0c', 'start');
    note(1867, 100, 'HC:-7.24', '#1a5fcc', 'start');
    ['70.00', '65.00', '60.00', '55.00', '50.00', '45.00', '40.00', '', '30.00'].forEach((value, i) => {
      const y = Math.round(110 + i * 93.4);
      text(1875, y + 3, value);
      line(`1867,${y + .5} 1873,${y + .5}`, '#999');
      for (let k = 1; k < 5 && i < 8; k++) line(`1867,${Math.round(y + k * 18.7) + .5} 1869,${Math.round(y + k * 18.7) + .5}`, '#999');
    });
    ['40,000', '30,000', '20,000', '10,000'].forEach((value, i) => {
      const y = 915 + i * 30.5;
      text(1875, Math.round(y + 3), value);
      line(`1867,${y} 1873,${y}`, '#999');
    });
    for (let y = 891; y < 1037; y += 6) line(`1867,${y + .5} 1869,${y + .5}`, '#999');
    rect(1870.500, 344.500, 1911.500, 372.500, '#ffdc6e', 'stroke="#000"');
    text(1874, 355, '10,479');
    text(1872, 367, '-2.79%', '#0000cc');
    rect(1871, 748, 1911, 761, '#1a5fcc');
    text(1875, 759, '10,000', '#fff');
    text(1875, 771, '-7.24%', '#1a5fcc');
    rect(1903, 884, 1911, 891, '#333');
    line('1905,886 1909,890', '#fff');
    line('1909,886 1905,890', '#fff');

    // Time axis and frame
    rect(49, 1038, 1913, 1057, '#fff');
    times.forEach(([label, x], i) => {
      line(`${x + .5},1039 ${x + .5},1056`, '#999');
      text(x + 2, 1050, label, '#444', 'start', i ? '' : 'class="text-xs font-bold"');
    });
    text(1875, 1050, '15:30:2');
    rect(1428.500, 1038.500, 1563.500, 1055.500, '#ffdc6e', 'stroke="#000"');
    text(1431, 1050, '2025/02/19(수) 13:47:35', '#444', 'start', 'class="text-xs"');
    line('6,880.500 1913,880.500', '#999');
    line('6,1038.500 1428,1038.500', '#999');
    line('1564,1038.500 1913,1038.500', '#999');
    line('48.500,77 48.500,1056', '#999');
    line('1866.500,77 1866.500,1056', '#999');
    line('6.500,76.500 1913.500,76.500 1913.500,1056.500 6.500,1056.500 6.500,76.500', '#999');

    document.getElementById('chart').innerHTML = out.join('');
  </script>
</body>

</html>
